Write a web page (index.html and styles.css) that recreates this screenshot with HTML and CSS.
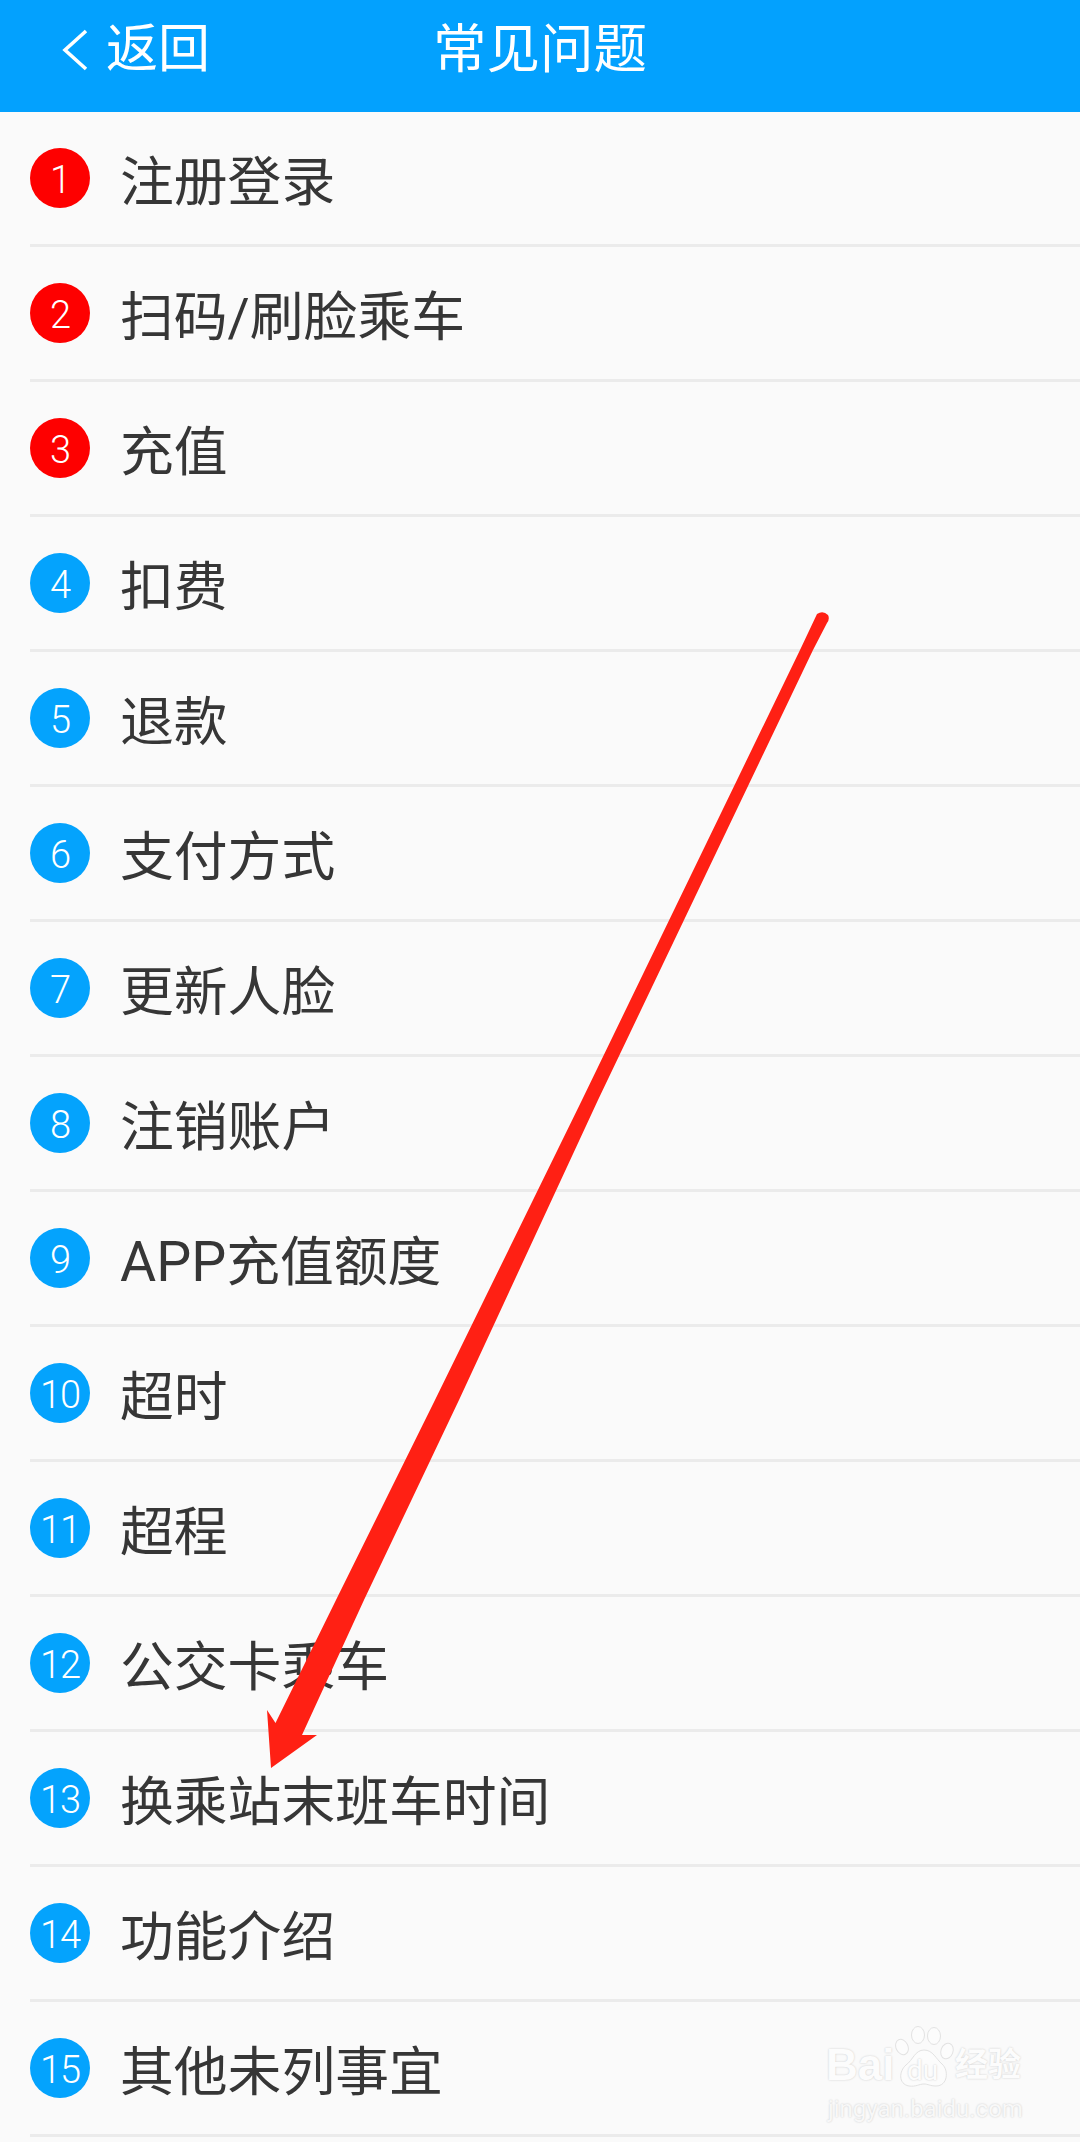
FILE: index.html
```html
<!doctype html>
<html>

<head>
    <meta charset="utf-8">
    <link rel="stylesheet" href="styles.css">
</head>

<body>
    <div class="topbar">
        <div class="back">
            <svg class="chevron" viewBox="0 0 30 42" width="30" height="42">
                <path d="M26 2 L5 21 L26 40" fill="none" stroke="#fff" stroke-width="3.6" />
            </svg>
            <span>返回</span>
        </div>
        <div class="title">常见问题</div>
        <div></div>
    </div>
    <ul class="list">
        <li class="row"><span class="num hot">1</span><span class="label">注册登录</span></li>
        <li class="row"><span class="num hot">2</span><span class="label">扫码/刷脸乘车</span></li>
        <li class="row"><span class="num hot">3</span><span class="label">充值</span></li>
        <li class="row"><span class="num">4</span><span class="label">扣费</span></li>
        <li class="row"><span class="num">5</span><span class="label">退款</span></li>
        <li class="row"><span class="num">6</span><span class="label">支付方式</span></li>
        <li class="row"><span class="num">7</span><span class="label">更新人脸</span></li>
        <li class="row"><span class="num">8</span><span class="label">注销账户</span></li>
        <li class="row"><span class="num">9</span><span class="label"><span class="latin">APP</span>充值额度</span></li>
        <li class="row"><span class="num">10</span><span class="label">超时</span></li>
        <li class="row"><span class="num">11</span><span class="label">超程</span></li>
        <li class="row"><span class="num">12</span><span class="label">公交卡乘车</span></li>
        <li class="row"><span class="num">13</span><span class="label">换乘站末班车时间</span></li>
        <li class="row"><span class="num">14</span><span class="label">功能介绍</span></li>
        <li class="row"><span class="num">15</span><span class="label">其他未列事宜</span></li>
    </ul>

    <!-- red annotation arrow drawn over the list -->
    <svg class="arrow" viewBox="0 0 1080 2142" width="1080" height="2142">
        <path d="M817 614 Q823 610 828 615 Q830 619 827 623 L813 650 L598 1100 L459 1400 L364 1600 L302 1735 L317 1735 L271 1768 L267 1710 L275.5 1723 L336 1600 L435 1400 L582 1100 L800 650 Z" fill="#ff2014" />
    </svg>

    <div class="mark">
        <div class="mark-top">
            <span class="mark-bai">Bai</span>
            <div class="paw">
                <svg viewBox="0 0 60 64" width="60" height="64">
                    <g fill="#fcfcfc" stroke="#e2e2e2" stroke-width="1">
                        <ellipse cx="7" cy="21" rx="6" ry="8" transform="rotate(-25 7 21)" />
                        <ellipse cx="23" cy="9" rx="6.500" ry="8.500" />
                        <ellipse cx="39" cy="10" rx="6.500" ry="8.500" />
                        <ellipse cx="52" cy="25" rx="6" ry="8" transform="rotate(20 52 25)" />
                        <path d="M29 24 C38 24 41 33 47 38 C54 44 53 60 41 60 C35 60 33 58 29 58 C24 58 21 61 14 60 C3 58 4 45 11 39 C18 34 20 24 29 24 Z" />
                    </g>
                </svg>
                <span class="paw-du">du</span>
            </div>
            <span class="mark-cn">经验</span>
        </div>
        <div class="mark-url">jingyan.baidu.com</div>
    </div>
</body>

</html>
```
FILE: styles.css
```css
body,
html {
    margin: 0;
    width: 100%;
    height: 100%;
    padding: 0;
    background-color: #fafafa;
    font-family: Roboto, "Noto Sans CJK SC", sans-serif;
    overflow: hidden;
}

body {
    position: relative;
}

.topbar {
    display: grid;
    grid-template-columns: 1fr auto 1fr;
    align-items: start;
    height: 112px;
    background-color: #03a1fe;
    color: white;
}

.back {
    display: flex;
    align-items: center;
    gap: 16px;
    padding: 19px 0 0 60px;
    font-size: 52px;
    line-height: 62px;
}

.chevron {
    display: block;
}

.title {
    padding-top: 19px;
    font-size: 53.500px;
    line-height: 62px;
}

.list {
    list-style: none;
    margin: 0;
    padding: 0;
}

.row {
    display: flex;
    align-items: center;
    gap: 30px;
    box-sizing: border-box;
    height: 135px;
    margin-left: 30px;
    border-bottom: 3px solid #ebebeb;
}

.num {
    display: flex;
    align-items: center;
    justify-content: center;
    flex: none;
    box-sizing: border-box;
    width: 60px;
    height: 60px;
    padding-top: 3px;
    border-radius: 50%;
    background-color: #04a3fd;
    color: white;
    font-size: 38px;
    font-weight: 300;
    letter-spacing: -1px;
}

.num.hot {
    background-color: #fe0000;
}

.label {
    position: relative;
    top: 5px;
    font-size: 53.800px;
    line-height: 62px;
    color: #363636;
}

.latin {
    font-size: 55.500px;
}

.arrow {
    position: absolute;
    top: 0;
    left: 0;
}

.mark {
    position: absolute;
    top: 2026px;
    left: 826px;
    width: 200px;
    color: #fcfcfc;
    text-shadow: 0 0 2px #c8c8c8;
}

.mark-top {
    display: flex;
    align-items: flex-end;
    height: 64px;
}

.mark-bai {
    width: 69px;
    font-size: 44px;
    font-weight: 700;
    line-height: 50px;
    font-family: "Liberation Sans", sans-serif;
}

.paw {
    position: relative;
    flex: none;
    width: 60px;
    height: 64px;
}

.paw svg {
    display: block;
}

.paw-du {
    position: absolute;
    left: 12px;
    top: 31px;
    font-size: 28px;
    line-height: 28px;
    color: #fcfcfc;
}

.mark-cn {
    font-size: 33px;
    line-height: 50px;
    font-weight: 700;
}

.mark-url {
    margin-top: 4px;
    padding-left: 2px;
    font-size: 24px;
    line-height: 30px;
    color: #f8f8f8;
}
```
